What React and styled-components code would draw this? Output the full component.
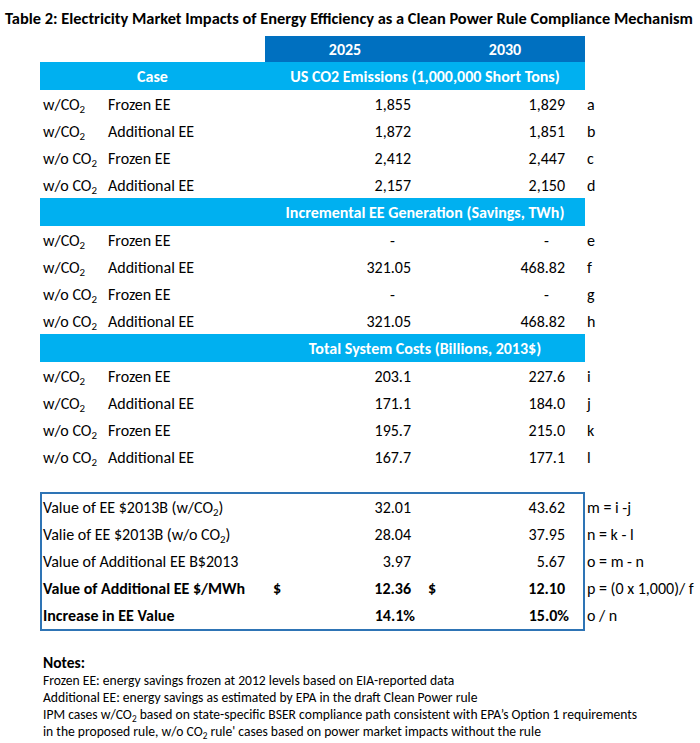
import React from 'react'
import { styled, createGlobalStyle } from 'styled-components'

const GlobalStyle = createGlobalStyle`
  body {
    margin: 0;
    background: #fff;
    color: #000;
    font-family: Carlito, Calibri, "Liberation Sans", sans-serif;
  }
`

const DARK = '#0070c0'
const LIGHT = '#00b0f0'
const COLS = '65px 160px 160px 160px 1fr'

const sections = [
  {
    title: 'US CO2 Emissions (1,000,000 Short Tons)',
    showCase: true,
    rows: [
      ['w/', 'Frozen EE', '1,855', '1,829', 'a'],
      ['w/', 'Additional EE', '1,872', '1,851', 'b'],
      ['w/o ', 'Frozen EE', '2,412', '2,447', 'c'],
      ['w/o ', 'Additional EE', '2,157', '2,150', 'd'],
    ],
  },
  {
    title: 'Incremental EE Generation (Savings, TWh)',
    rows: [
      ['w/', 'Frozen EE', '-', '-', 'e'],
      ['w/', 'Additional EE', '321.05', '468.82', 'f'],
      ['w/o ', 'Frozen EE', '-', '-', 'g'],
      ['w/o ', 'Additional EE', '321.05', '468.82', 'h'],
    ],
  },
  {
    title: 'Total System Costs (Billions, 2013$)',
    rows: [
      ['w/', 'Frozen EE', '203.1', '227.6', 'i'],
      ['w/', 'Additional EE', '171.1', '184.0', 'j'],
      ['w/o ', 'Frozen EE', '195.7', '215.0', 'k'],
      ['w/o ', 'Additional EE', '167.7', '177.1', 'l'],
    ],
  },
]

const Page = styled.div`
  padding-top: 8px;
`

const Title = styled.h1`
  margin: 0;
  padding-left: 5px;
  font-size: 16.4px;
  line-height: 20px;
  font-weight: 700;
  white-space: nowrap;
`

const Table = styled.div`
  margin: 8px 0 0 40px;
  display: flex;
  flex-direction: column;
  font-size: 16px;
`

const Row = styled.div`
  display: grid;
  grid-template-columns: ${COLS};
  height: ${(p) => p.$h || 27}px;
  align-items: center;
  white-space: nowrap;
`

const YearCell = styled.div`
  grid-column: ${(p) => p.$col};
  align-self: stretch;
  display: flex;
  align-items: center;
  justify-content: center;
  background: ${DARK};
  color: #fff;
  font-weight: 700;
`

const SectionCell = styled.div`
  grid-column: ${(p) => p.$span};
  align-self: stretch;
  display: flex;
  align-items: center;
  justify-content: center;
  background: ${LIGHT};
  color: #fff;
  font-weight: 700;
`

const Label = styled.div`
  padding: 1px 0 0 3px;
`

const Value = styled.div`
  text-align: right;
  padding: 1px ${(p) => p.$pr}px 0 0;
`

const Tag = styled.div`
  padding: 1px 0 0 2px;
`

const Sub = styled.sub`
  font-size: 0.68em;
  line-height: 0;
  vertical-align: -0.3em;
`

const BoxWrap = styled.div`
  margin: 22px 0 0 40px;
  display: grid;
  grid-template-columns: 545px 1fr;
  font-size: 16px;
`

const Box = styled.div`
  border: 2px solid #2e74b5;
  display: flex;
  flex-direction: column;
`

const BoxRow = styled.div`
  display: grid;
  grid-template-columns: 63px 160px 160px 158px;
  height: 27px;
  align-items: center;
  white-space: nowrap;
  font-weight: ${(p) => (p.$bold ? 700 : 400)};
`

const BoxLabel = styled.div`
  grid-column: 1 / 3;
  padding-left: 1px;
`

const Money = styled.div`
  display: flex;
  justify-content: space-between;
  padding: 0 ${(p) => p.$pr}px 0 ${(p) => p.$pl}px;
`

const Formulas = styled.div`
  display: flex;
  flex-direction: column;
  padding: 2px 0 0 2px;
`

const Formula = styled.div`
  height: 27px;
  display: flex;
  align-items: center;
  white-space: nowrap;
`

const Notes = styled.div`
  margin-top: 23px;
  padding-left: 43px;
`

const NotesHead = styled.div`
  font-weight: 700;
  font-size: 15.5px;
  line-height: 18px;
`

const NoteLine = styled.div`
  font-size: 13.6px;
  line-height: 17px;
  white-space: nowrap;
`

const CO2 = () => (
  <>
    CO<Sub>2</Sub>
  </>
)

const boxRows = [
  { label: <>Value of EE $2013B (w/<CO2 />)</>, a: '32.01', b: '43.62', f: 'm = i -j' },
  { label: <>Valie of EE $2013B (w/o <CO2 />)</>, a: '28.04', b: '37.95', f: 'n = k - l' },
  { label: 'Value of Additional EE B$2013', a: '3.97', b: '5.67', f: 'o = m - n' },
  { label: 'Value of Additional EE $/MWh', a: '12.36', b: '12.10', f: 'p = (0 x 1,000)/ f', bold: true, dollar: true },
  { label: 'Increase in EE Value', a: '14.1%', b: '15.0%', f: 'o / n', bold: true, pct: true },
]

export default function App() {
  return (
    <Page>
      <GlobalStyle />
      <Title>Table 2: Electricity Market Impacts of Energy Efficiency as a Clean Power Rule Compliance Mechanism</Title>
      <Table>
        <Row $h={26}>
          <YearCell $col="3">2025</YearCell>
          <YearCell $col="4">2030</YearCell>
        </Row>
        {sections.map((s) => (
          <React.Fragment key={s.title}>
            <Row $h={28}>
              <SectionCell $span="1 / 3">{s.showCase ? 'Case' : ''}</SectionCell>
              <SectionCell $span="3 / 5">{s.title}</SectionCell>
            </Row>
            {s.rows.map(([cond, scen, v1, v2, tag]) => (
              <Row key={tag}>
                <Label>{cond}<CO2 /></Label>
                <Label>{scen}</Label>
                <Value $pr={v1 === '-' ? 30 : 14}>{v1}</Value>
                <Value $pr={v2 === '-' ? 36 : 20}>{v2}</Value>
                <Tag>{tag}</Tag>
              </Row>
            ))}
          </React.Fragment>
        ))}
      </Table>
      <BoxWrap>
        <Box>
          {boxRows.map((r) => (
            <BoxRow key={r.f} $bold={r.bold}>
              <BoxLabel>{r.label}</BoxLabel>
              <Money $pl={8} $pr={r.pct ? 10 : 14}>
                <span>{r.dollar ? '$' : ''}</span>
                <span>{r.a}</span>
              </Money>
              <Money $pl={3} $pr={r.pct ? 14 : 18}>
                <span>{r.dollar ? '$' : ''}</span>
                <span>{r.b}</span>
              </Money>
            </BoxRow>
          ))}
        </Box>
        <Formulas>
          {boxRows.map((r) => (
            <Formula key={r.f}>{r.f}</Formula>
          ))}
        </Formulas>
      </BoxWrap>
      <Notes>
        <NotesHead>Notes:</NotesHead>
        <NoteLine>Frozen EE: energy savings frozen at 2012 levels based on EIA-reported data</NoteLine>
        <NoteLine>Additional EE: energy savings as estimated by EPA in the draft Clean Power rule</NoteLine>
        <NoteLine>IPM cases w/<CO2 /> based on state-specific BSER compliance path consistent with EPA’s Option 1 requirements</NoteLine>
        <NoteLine>in the proposed rule, w/o <CO2 /> rule' cases based on power market impacts without the rule</NoteLine>
      </Notes>
    </Page>
  )
}
